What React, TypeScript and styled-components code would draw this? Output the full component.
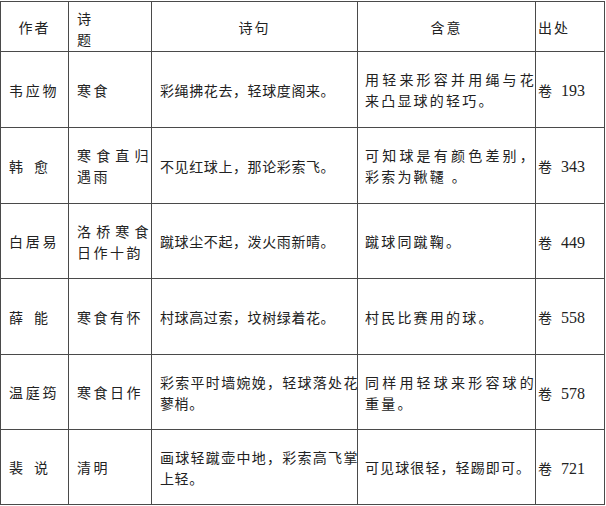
import React from "react"
import styled, { createGlobalStyle } from "styled-components"

const GlobalStyle = createGlobalStyle`
    body{
        margin: 0;
        background: #ffffff;
    }
`

type Align = "left" | "center"

interface Poem {
    author: string
    title: string[]
    titleFill?: boolean
    verse: string[]
    meaning: string[]
    meaningTight?: boolean
    volume: string
    height: number
}

const poems: Poem[] = [
    { author: "韦应物", title: ["寒食"], verse: ["彩绳拂花去，轻球度阁来。"], meaning: ["用轻来形容并用绳与花", "来凸显球的轻巧。"], volume: "193", height: 76 },
    { author: "韩 愈", title: ["寒食直归", "遇雨"], titleFill: true, verse: ["不见红球上，那论彩索飞。"], meaning: ["可知球是有颜色差别，", "彩索为鞦韆 。"], volume: "343", height: 76 },
    { author: "白居易", title: ["洛桥寒食", "日作十韵"], titleFill: true, verse: ["蹴球尘不起，泼火雨新晴。"], meaning: ["蹴球同蹴鞠。"], volume: "449", height: 75 },
    { author: "薛 能", title: ["寒食有怀"], verse: ["村球高过索，坟树绿着花。"], meaning: ["村民比赛用的球。"], volume: "558", height: 76 },
    { author: "温庭筠", title: ["寒食日作"], verse: ["彩索平时墙婉娩，轻球落处花", "蓼梢。"], meaning: ["同样用轻球来形容球的", "重量。"], volume: "578", height: 75 },
    { author: "裴 说", title: ["清明"], verse: ["画球轻蹴壶中地，彩索高飞掌", "上轻。"], meaning: ["可见球很轻，轻踢即可。"], meaningTight: true, volume: "721", height: 75 },
]

const App = () => {
    return(
        <>
            <GlobalStyle/>
            <Page>
                <Table>
                    <colgroup>
                        <col style={{ width: 68 }}/>
                        <col style={{ width: 83 }}/>
                        <col style={{ width: 206 }}/>
                        <col style={{ width: 178 }}/>
                        <col style={{ width: 69 }}/>
                    </colgroup>
                    <thead>
                        <Row $h={50}>
                            <HeadCell $align="center">作者</HeadCell>
                            <HeadCell $align="left" $pl={8} $pt={7} $lh={21}>
                                <Line>诗</Line>
                                <Line>题</Line>
                            </HeadCell>
                            <HeadCell $align="center">诗句</HeadCell>
                            <HeadCell $align="center">含意</HeadCell>
                            <HeadCell $align="left" $pl={2}>出处</HeadCell>
                        </Row>
                    </thead>
                    <tbody>
                        {poems.map((p) => (
                            <Row $h={p.height} key={p.volume}>
                                <Cell $pl={8} $spacing={2.7}>
                                    <Name>{p.author}</Name>
                                </Cell>
                                <Cell $pl={8} $pr={2} $spacing={2.5}>
                                    {p.title.map((t, i) => (
                                        <Line key={t} $fill={p.titleFill && i === 0}>{t}</Line>
                                    ))}
                                </Cell>
                                <Cell $pl={8} $pr={1} $spacing={0.6}>
                                    {p.verse.map((t, i) => (
                                        <Line key={t} $fill={p.verse.length > 1 && i === 0}>{t}</Line>
                                    ))}
                                </Cell>
                                <Cell $pl={7} $pr={1} $spacing={p.meaningTight ? 1.1 : 2.2}>
                                    {p.meaning.map((t, i) => (
                                        <Line key={t} $fill={p.meaning.length > 1 && i === 0}>{t}</Line>
                                    ))}
                                </Cell>
                                <Cell $pl={2}>
                                    卷<Volume>{p.volume}</Volume>
                                </Cell>
                            </Row>
                        ))}
                    </tbody>
                </Table>
            </Page>
        </>
    )
}

const Page = styled.div`
    padding-top: 1px;
    width: 606px;
    height: 505px;
    overflow: hidden;
    background: #ffffff;
`
const Table = styled.table`
    border-collapse: collapse;
    table-layout: fixed;
    width: 604px;
    font-family: "Liberation Serif", "Noto Sans CJK SC", serif;
    font-size: 14px;
    color: #222222;
`
const Row = styled.tr<{ $h: number }>`
    height: ${(p) => p.$h}px;
`
const HeadCell = styled.th<{ $align: Align; $pl?: number; $pt?: number; $lh?: number }>`
    border: 1px solid #4a4a4a;
    font-weight: normal;
    text-align: ${(p) => p.$align};
    padding: ${(p) => p.$pt ?? 5}px 0 0 ${(p) => p.$pl ?? 0}px;
    vertical-align: middle;
    line-height: ${(p) => p.$lh ?? 22}px;
    letter-spacing: 2px;
`
const Cell = styled.td<{ $pl: number; $pr?: number; $spacing?: number }>`
    border: 1px solid #4a4a4a;
    padding: 3px ${(p) => p.$pr ?? 0}px 0 ${(p) => p.$pl}px;
    vertical-align: middle;
    line-height: 21px;
    letter-spacing: ${(p) => p.$spacing ?? 0}px;
    white-space: nowrap;
`
const Line = styled.div<{ $fill?: boolean }>`
    text-align: ${(p) => (p.$fill ? "justify" : "left")};
    text-align-last: ${(p) => (p.$fill ? "justify" : "auto")};
    margin-right: ${(p) => (p.$fill ? "-2px" : "0")};
`
const Name = styled.span`
    word-spacing: 2px;
`
const Volume = styled.span`
    margin-left: 9px;
    font-size: 16px;
`

export default App
